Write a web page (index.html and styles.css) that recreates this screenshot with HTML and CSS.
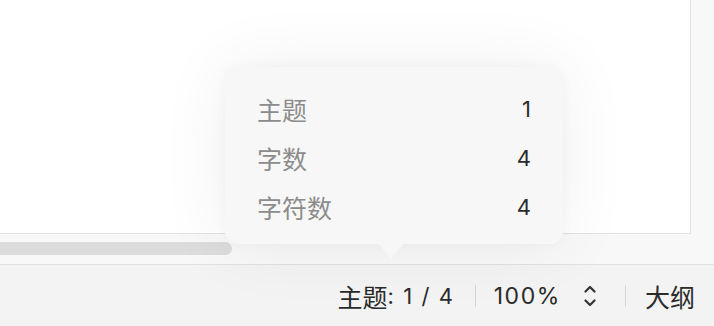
FILE: index.html
```html
<!DOCTYPE html>
<html lang="zh-CN">
<head>
<meta charset="utf-8">
<link rel="stylesheet" href="styles.css">
</head>
<body>
<div class="app">
  <div class="main">
    <div class="page"></div>
    <div class="hscroll"><div class="thumb"></div></div>
  </div>
  <div class="statusbar">
    <span class="item topic"><span class="cjk">主题</span><span class="lat">: 1 / 4</span></span>
    <span class="sep"></span>
    <span class="item zoom lat">100%</span>
    <svg class="chev" width="12" height="22" viewBox="0 0 12 22" aria-hidden="true">
      <path d="M1.5 6.5 L6 2 L10.5 6.5" fill="none" stroke="#333" stroke-width="2.2" stroke-linecap="round" stroke-linejoin="round"/>
      <path d="M1.5 15.5 L6 20 L10.5 15.5" fill="none" stroke="#333" stroke-width="2.2" stroke-linecap="round" stroke-linejoin="round"/>
    </svg>
    <span class="sep"></span>
    <span class="item outline cjk">大纲</span>
  </div>
  <div class="popover">
    <div class="row"><span class="label">主题</span><span class="num">1</span></div>
    <div class="row"><span class="label">字数</span><span class="num">4</span></div>
    <div class="row"><span class="label">字符数</span><span class="num">4</span></div>
    <div class="arrow"></div>
  </div>
</div>
</body>
</html>
```
FILE: styles.css
```css
html, body {
  margin: 0;
  padding: 0;
}
body {
  background: #f8f8f8;
  font-family: "Inter", "Noto Sans CJK SC", sans-serif;
  overflow: hidden;
}
.app {
  position: relative;
  width: 714px;
  height: 326px;
  display: flex;
  flex-direction: column;
}
.main {
  height: 264px;
  display: flex;
  flex-direction: column;
}
.page {
  width: 690px;
  height: 233px;
  background: #ffffff;
  border-right: 1px solid #e2e2e2;
  border-bottom: 1px solid #e2e2e2;
}
.hscroll {
  padding-top: 8px;
}
.thumb {
  width: 232px;
  height: 13px;
  background: #dcdcdc;
  border-radius: 0 7px 7px 0;
}
.statusbar {
  flex: 1;
  background: #f3f3f3;
  border-top: 1px solid #e0e0e0;
  display: flex;
  align-items: center;
  justify-content: flex-end;
  padding-right: 19px;
  color: #2b2b2b;
}
.cjk {
  font-family: "Noto Sans CJK SC", sans-serif;
  font-size: 25px;
}
.lat {
  font-family: "Inter", "Noto Sans CJK SC", sans-serif;
  font-size: 23px;
  letter-spacing: 1.6px;
}
.topic .lat {
  font-size: 22px;
  letter-spacing: 1.6px;
}
.item {
  display: flex;
  align-items: center;
}
.sep {
  width: 1px;
  height: 22px;
  background: #d6d6d6;
}
.topic { margin-right: 20px; }
.zoom { margin-left: 18px; margin-right: 23px; }
.chev { margin-right: 29px; }
.outline { margin-left: 19px; }
.popover {
  position: absolute;
  left: 225px;
  top: 67px;
  width: 274px;
  height: 160px;
  padding: 17px 32px 0 32px;
  background: #f7f7f7;
  border-radius: 13px;
  box-shadow: 0 0 70px rgba(0, 0, 0, 0.07), 0 0 12px rgba(0, 0, 0, 0.03);
}
.row {
  display: flex;
  justify-content: space-between;
  align-items: center;
  height: 49px;
}
.label {
  color: #8c8c8c;
  font-family: "Noto Sans CJK SC", sans-serif;
  font-size: 25px;
}
.num {
  color: #2b2b2b;
  font-family: "Inter", sans-serif;
  font-size: 22px;
}
.arrow {
  position: absolute;
  left: 153px;
  bottom: -15px;
  width: 0;
  height: 0;
  border-left: 13px solid transparent;
  border-right: 13px solid transparent;
  border-top: 16px solid #f7f7f7;
}
```
